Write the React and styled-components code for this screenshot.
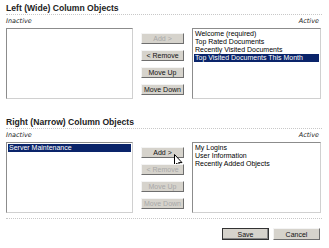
import styled, { createGlobalStyle } from "styled-components";

const GlobalStyle = createGlobalStyle`
  html, body {
    margin: 0;
    padding: 0;
    background: #ffffff;
  }
  body {
    font-family: "Liberation Sans", "DejaVu Sans", sans-serif;
    color: #000;
  }
`;

const sections = [
  {
    title: "Left (Wide) Column Objects",
    inactive: [],
    active: [
      "Welcome (required)",
      "Top Rated Documents",
      "Recently Visited Documents",
      "Top Visited Documents This Month",
    ],
    selectedInactive: -1,
    selectedActive: 3,
    buttons: [
      { label: "Add >", disabled: true },
      { label: "< Remove" },
      { label: "Move Up" },
      { label: "Move Down" },
    ],
  },
  {
    title: "Right (Narrow) Column Objects",
    inactive: ["Server Maintenance"],
    active: ["My Logins", "User Information", "Recently Added Objects"],
    selectedInactive: 0,
    selectedActive: -1,
    buttons: [
      { label: "Add >", cursor: true },
      { label: "< Remove", disabled: true },
      { label: "Move Up", disabled: true },
      { label: "Move Down", disabled: true },
    ],
  },
];

function Cursor() {
  return (
    <CursorSvg width="9" height="15" viewBox="0 0 9 15">
      <path
        d="M0.5 0.5 L0.5 11.5 L3 9.2 L4.8 13.6 L6.4 12.9 L4.6 8.6 L8 8.6 Z"
        fill="#fff"
        stroke="#000"
        strokeWidth="1"
        strokeLinejoin="round"
      />
    </CursorSvg>
  );
}

function ListBox({ items, selected }) {
  return (
    <List>
      {items.map((item, i) => (
        <Item key={item} selected={i === selected}>
          {item}
        </Item>
      ))}
    </List>
  );
}

function Section({ section }) {
  return (
    <SectionWrap>
      <Heading>{section.title}</Heading>
      <Labels>
        <Label>Inactive</Label>
        <Label>Active</Label>
      </Labels>
      <Row>
        <ListBox items={section.inactive} selected={section.selectedInactive} />
        <ButtonColumn>
          {section.buttons.map((b) => (
            <ButtonSlot key={b.label}>
              <Button disabled={b.disabled}>{b.label}</Button>
              {b.cursor && <Cursor />}
            </ButtonSlot>
          ))}
        </ButtonColumn>
        <ListBox items={section.active} selected={section.selectedActive} />
      </Row>
    </SectionWrap>
  );
}

export default function App() {
  return (
    <>
      <GlobalStyle />
      <Page>
        {sections.map((s) => (
          <Section key={s.title} section={s} />
        ))}
        <Footer>
          <Button primary wide>
            Save
          </Button>
          <Button wide>Cancel</Button>
        </Footer>
      </Page>
    </>
  );
}

const Page = styled.div`
  width: 316px;
  padding: 3px 7px 0 6px;
`;

const SectionWrap = styled.div`
  & + & {
    margin-top: 18px;
  }
`;

const Heading = styled.div`
  font-family: "Liberation Sans", sans-serif;
  font-weight: 700;
  font-size: 8.6px;
  line-height: 10px;
  color: #222;
  padding-bottom: 1px;
  border-bottom: 1px dotted #c8c8c8;
`;

const Labels = styled.div`
  display: flex;
  justify-content: space-between;
  padding: 2px 3px 0 0;
  height: 10px;
`;

const Label = styled.span`
  font-family: "DejaVu Sans", sans-serif;
  font-style: italic;
  font-size: 6.5px;
  line-height: 8px;
  color: #222;
`;

const Row = styled.div`
  display: grid;
  grid-template-columns: 127px 43px 129px;
  column-gap: 8px;
  align-items: start;
  margin-top: 1px;
`;

const List = styled.div`
  height: 71px;
  box-sizing: border-box;
  border: 1px solid;
  border-color: #8c8c8c #d0d0d0 #d0d0d0 #8c8c8c;
  padding: 1px;
  background: #fff;
`;

const Item = styled.div`
  font-family: "Liberation Sans", sans-serif;
  font-size: 7px;
  line-height: 8px;
  height: 8px;
  padding-left: 1px;
  white-space: nowrap;
  color: ${(p) => (p.selected ? "#fff" : "#000")};
  background: ${(p) => (p.selected ? "#0a246a" : "transparent")};
`;

const ButtonColumn = styled.div`
  display: flex;
  flex-direction: column;
  gap: 6px;
  padding-top: 5px;
`;

const ButtonSlot = styled.div`
  position: relative;
  display: flex;
`;

const CursorSvg = styled.svg`
  position: absolute;
  left: 33px;
  top: 7px;
`;

const Button = styled.button`
  box-sizing: border-box;
  width: ${(p) => (p.wide ? "47px" : "43px")};
  height: ${(p) => (p.wide ? "12px" : "11px")};
  padding: 0;
  margin: 0;
  font-family: "Liberation Sans", sans-serif;
  font-size: 7px;
  line-height: 9px;
  background: #d6d3cc;
  color: ${(p) => (p.disabled ? "#a8a8a8" : "#111")};
  border: 1px solid;
  border-color: ${(p) =>
    p.primary ? "#333 #333 #333 #333" : "#f4f4f4 #6e6e6e #6e6e6e #f4f4f4"};
  box-shadow: ${(p) => (p.primary ? "inset -1px -1px 0 #888" : "none")};
  cursor: default;
`;

const Footer = styled.div`
  display: flex;
  justify-content: flex-end;
  gap: 4px;
  margin-top: 5px;
  padding: 9px 2px 0 0;
  border-top: 1px dotted #c8c8c8;
`;
